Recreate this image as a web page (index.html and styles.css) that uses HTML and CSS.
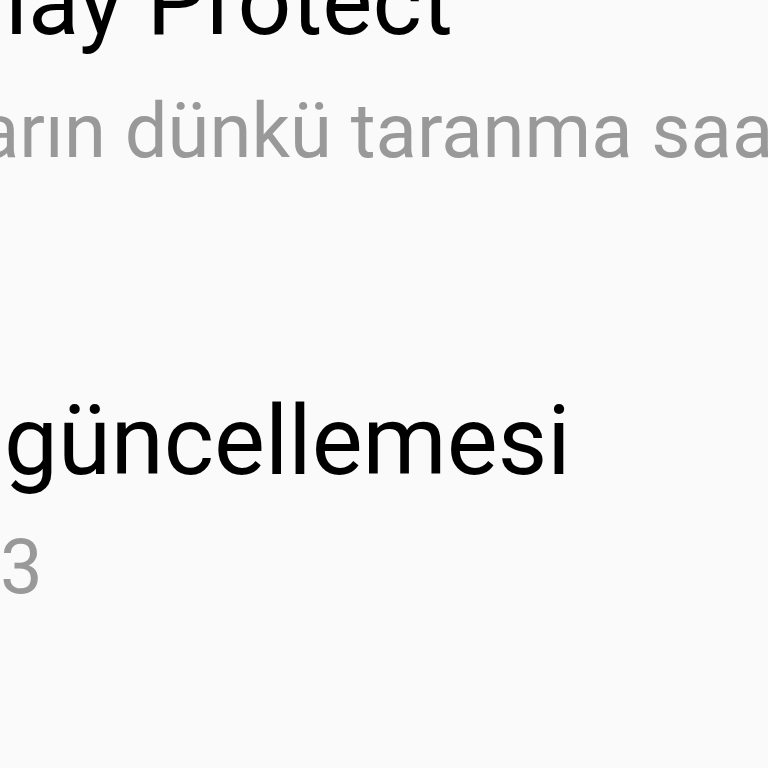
FILE: index.html
```html
<!DOCTYPE html>
<html lang="tr">
<head>
<meta charset="utf-8">
<link rel="stylesheet" href="styles.css">
</head>
<body>
<div class="list">
  <div class="item first">
    <div class="title line t1-line"><span class="pre"><span>Google P</span></span><span class="vis t1">lay Protect</span></div>
    <div class="sub line"><span class="pre"><span>Uygulamal</span></span><span class="vis s1">arın dünkü taranma saati: 21:34</span></div>
  </div>
  <div class="item second">
    <div class="title line"><span class="pre"><span>Google Play sistem </span></span><span class="vis t2">güncellemesi</span></div>
    <div class="sub line"><span class="pre"><span>1 Ağustos 202</span></span><span class="vis s2">3</span></div>
  </div>
</div>
</body>
</html>
```

FILE: styles.css
```css
html, body {
  margin: 0;
  padding: 0;
  background: #fafafa;
  width: 768px;
  height: 768px;
  overflow: hidden;
}
body {
  font-family: Roboto, "Noto Sans", sans-serif;
  -webkit-font-smoothing: antialiased;
}
.list {
  display: flex;
  flex-direction: column;
  margin-top: -58px;
}
.line {
  display: flex;
  white-space: nowrap;
}
.pre {
  display: flex;
  justify-content: flex-end;
  width: 0;
  flex: 0 0 0;
}
.title {
  font-size: 96px;
  line-height: 120px;
  color: #000;
}
.t1-line {
  font-size: 94.5px;
}
.sub {
  font-size: 76px;
  line-height: 96px;
  color: #999;
  margin-top: 21px;
}
.second {
  margin-top: 202px;
}
.second .sub {
  margin-top: 18px;
}
.t1 { margin-left: 5px; }
.s1 { margin-left: -22px; }
.t2 { margin-left: 4px; }
.s2 { margin-left: 0; }
```
